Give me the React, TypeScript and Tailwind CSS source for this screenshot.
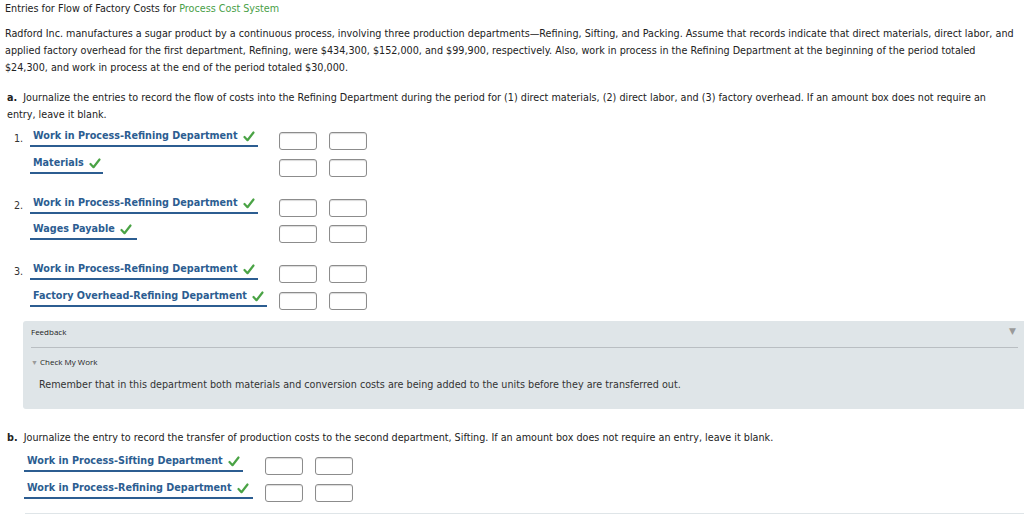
import React from "react";

const Check = () => (
  <svg width="12" height="11" viewBox="0 0 12 11" className="inline-block ml-[5px] -mb-[1px]">
    <path d="M1.5 6 L4.5 9.2 L10.5 1.5" fill="none" stroke="#4aa345" strokeWidth="2.2" strokeLinecap="round" strokeLinejoin="round" />
  </svg>
);

const Box = () => (
  <div className="w-[38px] h-[18px] border border-[#8c8c8c] rounded-[3px] bg-white shadow-[inset_0_1px_1px_rgba(0,0,0,0.15)]" />
);

const Label = ({ text, w }: { text: string; w: number }) => (
  <div className="border-b-2 border-[#2c5d91] pb-[1px] pl-[3px] font-bold text-[#2c5d91] whitespace-nowrap" style={{ width: w }}>
    {text}
    <Check />
  </div>
);

const Row = ({ num, text, w }: { num?: string; text: string; w: number }) => (
  <div className="flex items-end h-[26.5px]">
    <div className="w-[30px] pl-[14px] text-[#333]">{num}</div>
    <div className="w-[249px]">
      <Label text={text} w={w} />
    </div>
    <div className="flex gap-[12px] mb-[-3px]">
      <Box />
      <Box />
    </div>
  </div>
);

export default function App() {
  return (
    <div
      className="w-[1024px] h-[514px] overflow-hidden bg-white text-[9.65px] text-[#222] leading-[17px]"
      style={{ fontFamily: "Verdana, 'DejaVu Sans', sans-serif" }}
    >
      <div className="pl-[5px] whitespace-nowrap">
        Entries for Flow of Factory Costs for <span className="text-[#49a047]">Process Cost System</span>
      </div>
      <div className="pl-[5px] pt-[8px] whitespace-nowrap">
        Radford Inc. manufactures a sugar product by a continuous process, involving three production departments—Refining, Sifting, and Packing. Assume that records indicate that direct materials, direct labor, and
        <br />
        applied factory overhead for the first department, Refining, were $434,300, $152,000, and $99,900, respectively. Also, work in process in the Refining Department at the beginning of the period totaled
        <br />
        $24,300, and work in process at the end of the period totaled $30,000.
      </div>
      <div className="pl-[7px] pt-[13px] whitespace-nowrap">
        <b>a.</b>&nbsp; Journalize the entries to record the flow of costs into the Refining Department during the period for (1) direct materials, (2) direct labor, and (3) factory overhead. If an amount box does not require an
        <br />
        entry, leave it blank.
      </div>
      <div className="-mt-[2.5px]">
        <Row num="1." text="Work in Process-Refining Department" w={228} />
        <Row text="Materials" w={73} />
        <div className="h-[13.5px]" />
        <Row num="2." text="Work in Process-Refining Department" w={228} />
        <Row text="Wages Payable" w={107} />
        <div className="h-[13.5px]" />
        <Row num="3." text="Work in Process-Refining Department" w={228} />
        <Row text="Factory Overhead-Refining Department" w={237} />
      </div>
      <div className="ml-[23px] mt-[14px] h-[88px] bg-[#dfe5e8] rounded-l-[3px] px-[8px] pt-[2px] relative">
        <div className="text-[8px] text-[#222] h-[17px] leading-[17px]" style={{ fontFamily: "'Open Sans', sans-serif" }}>Feedback</div>
        <div className="absolute right-[8px] top-[2px] text-[9px] text-[#9a9a9a]">▼</div>
        <div className="border-t border-[#b9bec2] mr-[-2px] mt-[7px]" />
        <div className="text-[8px] mt-[5px] leading-[17px]" style={{ fontFamily: "'Open Sans', sans-serif" }}>
          <span className="text-[#9a9a9a] text-[7px] mr-[2px]">▼</span>Check My Work
        </div>
        <div className="pl-[8px] mt-[5px] text-[#333]">
          Remember that in this department both materials and conversion costs are being added to the units before they are transferred out.
        </div>
      </div>
      <div className="pl-[7px] pt-[20px] whitespace-nowrap">
        <b>b.</b>&nbsp; Journalize the entry to record the transfer of production costs to the second department, Sifting. If an amount box does not require an entry, leave it blank.
      </div>
      <div className="pl-[24px]">
        <div className="flex items-end h-[26px]">
          <div className="w-[241px]">
            <Label text="Work in Process-Sifting Department" w={219} />
          </div>
          <div className="flex gap-[12px] mb-[-3px]"><Box /><Box /></div>
        </div>
        <div className="flex items-end h-[27px]">
          <div className="w-[241px]">
            <Label text="Work in Process-Refining Department" w={229} />
          </div>
          <div className="flex gap-[12px] mb-[-3px]"><Box /><Box /></div>
        </div>
      </div>
      <div className="ml-[25px] mt-[14px] border-t border-[#dfe5e8]" />
    </div>
  );
}
